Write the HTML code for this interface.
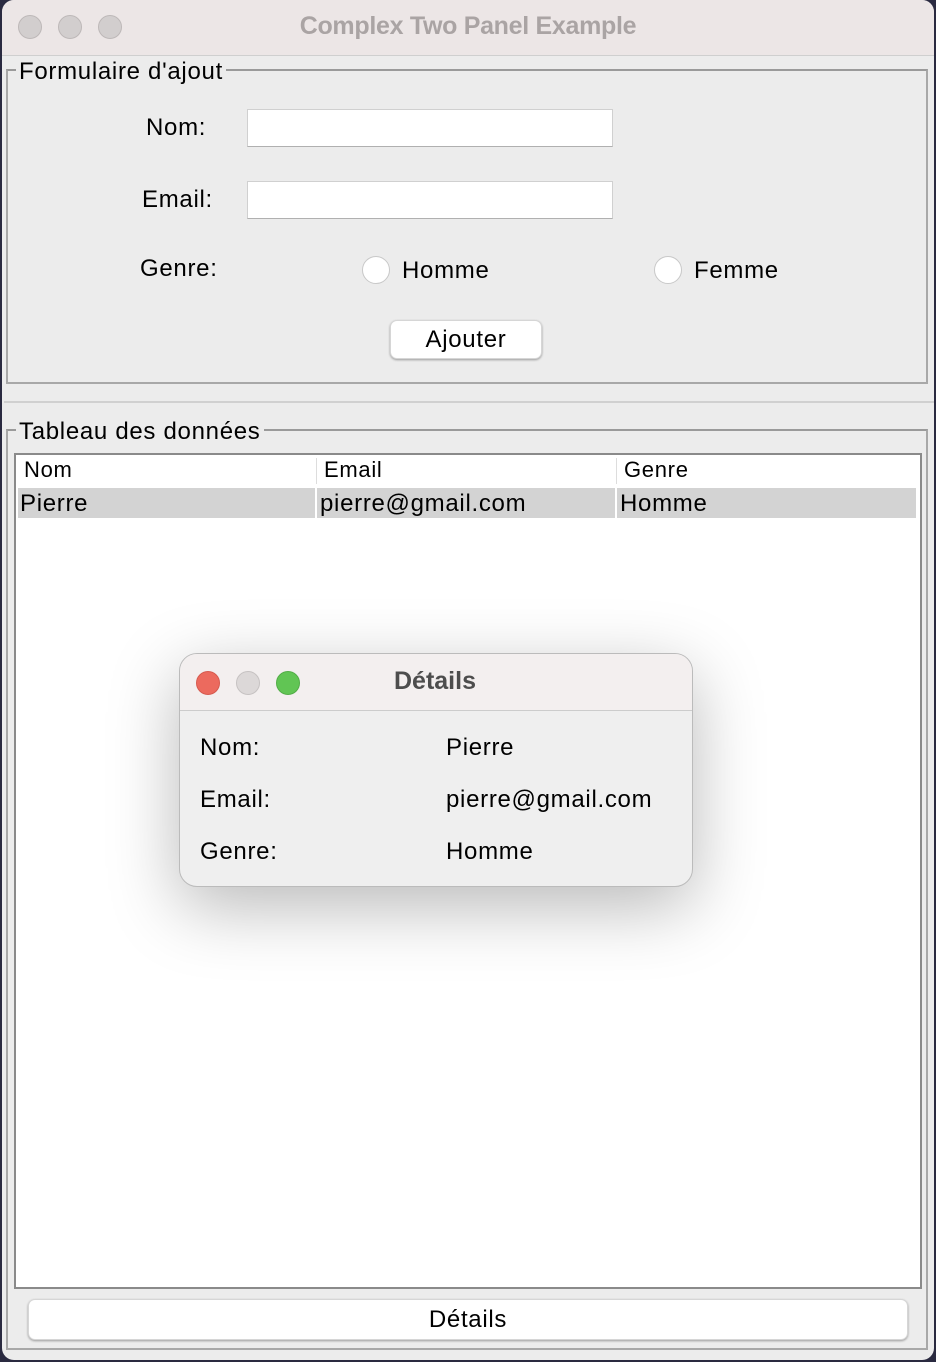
<!DOCTYPE html>
<html><head><meta charset="utf-8"><style>
*{margin:0;padding:0;box-sizing:border-box}
body{width:936px;height:1362px;background:#2a2a40;font-family:"Liberation Sans",sans-serif;position:relative;overflow:hidden}
.a{position:absolute}
.win{left:2px;top:0;width:932px;height:1360px;background:#ececec;border-radius:12px;overflow:hidden}
.tb{left:0;top:0;width:932px;height:56px;background:#ece6e6;border-bottom:1px solid #cfcfcf}
.dot{width:24px;height:24px;border-radius:50%;background:#d2cece;border:1px solid #bdb8b8}
.t{font-size:24px;color:#000;white-space:nowrap;letter-spacing:0.7px}
.fs{border:2px solid #a8a8a8;border-top-color:#9a9a9a}
.leg{background:#ececec;padding:0 3px}
.inp{background:#fff;border:1px solid #d0d0d0;border-bottom-color:#b0b0b0}
.rad{width:28px;height:28px;border-radius:50%;background:#fff;border:1px solid #c8c8c8}
.btn{background:#fff;border-radius:7px;box-shadow:0 1px 2px rgba(0,0,0,.35);border:1px solid #d6d6d6;text-align:center}
</style></head><body>
<div class="a win">
 <div class="a tb">
  <div class="a dot" style="left:16px;top:15px"></div>
  <div class="a dot" style="left:56px;top:15px"></div>
  <div class="a dot" style="left:96px;top:15px"></div>
  <div class="a" style="left:0;width:932px;top:12px;text-align:center;font-weight:bold;font-size:25px;color:#aaa4a4;letter-spacing:-0.3px">Complex Two Panel Example</div>
 </div>
 <div class="a fs" style="left:4px;top:69px;width:922px;height:315px"></div>
 <div class="a t leg" style="left:14px;top:58px">Formulaire d'ajout</div>
 <div class="a t" style="left:144px;top:114px">Nom:</div>
 <div class="a inp" style="left:245px;top:109px;width:366px;height:38px"></div>
 <div class="a t" style="left:140px;top:186px">Email:</div>
 <div class="a inp" style="left:245px;top:181px;width:366px;height:38px"></div>
 <div class="a t" style="left:138px;top:255px">Genre:</div>
 <div class="a rad" style="left:360px;top:256px"></div>
 <div class="a t" style="left:400px;top:257px">Homme</div>
 <div class="a rad" style="left:652px;top:256px"></div>
 <div class="a t" style="left:692px;top:257px">Femme</div>
 <div class="a btn t" style="left:388px;top:320px;width:152px;height:39px;line-height:37px">Ajouter</div>
 <div class="a" style="left:2px;top:401px;width:930px;height:2px;background:#d0d0d0"></div>
 <div class="a fs" style="left:4px;top:429px;width:922px;height:921px"></div>
 <div class="a t leg" style="left:14px;top:418px">Tableau des données</div>
 <div class="a" style="left:12px;top:453px;width:908px;height:836px;background:#fff;border:2px solid #8a8a8a"></div>
 <div class="a t" style="left:22px;top:457px;font-size:22px">Nom</div>
 <div class="a" style="left:314px;top:458px;width:1px;height:26px;background:#ddd"></div>
 <div class="a t" style="left:322px;top:457px;font-size:22px">Email</div>
 <div class="a" style="left:614px;top:458px;width:1px;height:26px;background:#ddd"></div>
 <div class="a t" style="left:622px;top:457px;font-size:22px">Genre</div>
 <div class="a" style="left:16px;top:488px;width:898px;height:30px;background:#d3d3d3"></div>
 <div class="a" style="left:313px;top:488px;width:2px;height:30px;background:#fff"></div>
 <div class="a" style="left:613px;top:488px;width:2px;height:30px;background:#fff"></div>
 <div class="a t" style="left:18px;top:490px">Pierre</div>
 <div class="a t" style="left:318px;top:490px">pierre@gmail.com</div>
 <div class="a t" style="left:618px;top:490px">Homme</div>
 <div class="a btn t" style="left:26px;top:1299px;width:880px;height:41px;line-height:39px">Détails</div>
</div>
<div class="a" style="left:179px;top:653px;width:514px;height:234px;background:#efefef;border-radius:18px;border:1px solid #bbb;box-shadow:0 20px 70px rgba(0,0,0,.28);overflow:hidden">
 <div class="a" style="left:0;top:0;width:514px;height:57px;background:#f3efef;border-bottom:1px solid #ccc"></div>
 <div class="a" style="left:16px;top:17px;width:24px;height:24px;border-radius:50%;background:#ec6a5e;border:1px solid #d65a4f"></div>
 <div class="a" style="left:56px;top:17px;width:24px;height:24px;border-radius:50%;background:#dcd8d8;border:1px solid #c6c2c2"></div>
 <div class="a" style="left:96px;top:17px;width:24px;height:24px;border-radius:50%;background:#61c554;border:1px solid #52ad47"></div>
 <div class="a" style="left:0;width:510px;top:13px;text-align:center;font-weight:bold;font-size:25px;color:#4d4d4d">Détails</div>
 <div class="a t" style="left:20px;top:80px">Nom:</div>
 <div class="a t" style="left:266px;top:80px">Pierre</div>
 <div class="a t" style="left:20px;top:132px">Email:</div>
 <div class="a t" style="left:266px;top:132px">pierre@gmail.com</div>
 <div class="a t" style="left:20px;top:184px">Genre:</div>
 <div class="a t" style="left:266px;top:184px">Homme</div>
</div>
</body></html>
